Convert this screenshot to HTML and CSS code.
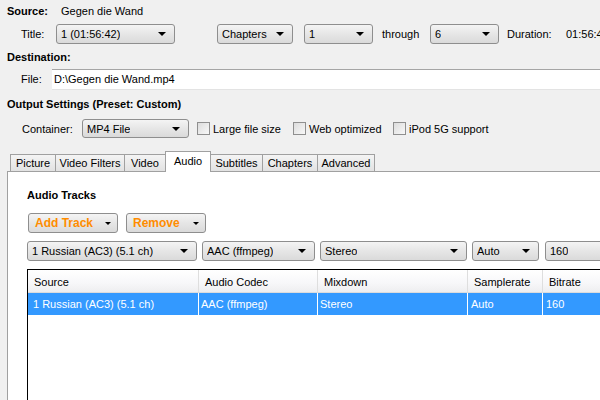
FILE: index.html
```html
<!DOCTYPE html>
<html>
<head>
<meta charset="utf-8">
<link rel="stylesheet" href="styles.css">
</head>
<body>
<div class="app">
  <div class="row r-source">
    <span class="bold w-src">Source:</span><span>Gegen die Wand</span>
  </div>
  <div class="row r-title">
    <span class="lbl w-title">Title:</span>
    <div class="combo c-title"><span>1 (01:56:42)</span><i class="arr"></i></div>
    <div class="combo c-chap"><span>Chapters</span><i class="arr"></i></div>
    <div class="combo c-from"><span>1</span><i class="arr"></i></div>
    <span class="through">through</span>
    <div class="combo c-to"><span>6</span><i class="arr"></i></div>
    <span class="dur-l">Duration:</span>
    <span class="dur-v">01:56:42</span>
  </div>
  <div class="row r-dest"><span class="bold">Destination:</span></div>
  <div class="row r-file">
    <span class="lbl w-file">File:</span>
    <div class="input">D:\Gegen die Wand.mp4</div>
  </div>
  <div class="row r-out"><span class="bold">Output Settings (Preset: Custom)</span></div>
  <div class="row r-cont">
    <span class="lbl w-cont">Container:</span>
    <div class="combo c-cont"><span>MP4 File</span><i class="arr"></i></div>
    <span class="chk"></span><span class="chk-l l1">Large file size</span>
    <span class="chk"></span><span class="chk-l l2">Web optimized</span>
    <span class="chk"></span><span class="chk-l">iPod 5G support</span>
  </div>
  <div class="tabs">
    <div class="tab t-pic">Picture</div>
    <div class="tab t-vf">Video Filters</div>
    <div class="tab t-vid">Video</div>
    <div class="tab active t-aud">Audio</div>
    <div class="tab t-sub">Subtitles</div>
    <div class="tab t-chp">Chapters</div>
    <div class="tab t-adv">Advanced</div>
  </div>
  <div class="panel">
    <div class="bold p-title">Audio Tracks</div>
    <div class="btns">
      <div class="btn b-add">Add Track<i class="arr sm"></i></div>
      <div class="btn b-rem">Remove<i class="arr sm"></i></div>
    </div>
    <div class="combos">
      <div class="combo a1"><span>1 Russian (AC3) (5.1 ch)</span><i class="arr"></i></div>
      <div class="combo a2"><span>AAC (ffmpeg)</span><i class="arr"></i></div>
      <div class="combo a3"><span>Stereo</span><i class="arr"></i></div>
      <div class="combo a4"><span>Auto</span><i class="arr"></i></div>
      <div class="combo a5"><span>160</span><i class="arr"></i></div>
    </div>
    <div class="table">
      <div class="thead">
        <div class="th">Source</div>
        <div class="th">Audio Codec</div>
        <div class="th">Mixdown</div>
        <div class="th">Samplerate</div>
        <div class="th">Bitrate</div>
      </div>
      <div class="trow">
        <div class="td">1 Russian (AC3) (5.1 ch)</div>
        <div class="td">AAC (ffmpeg)</div>
        <div class="td">Stereo</div>
        <div class="td">Auto</div>
        <div class="td">160</div>
      </div>
    </div>
  </div>
</div>
</body>
</html>
```
FILE: styles.css
```css
* { box-sizing: border-box; }
html, body { margin: 0; padding: 0; }
body {
  width: 600px; height: 400px; overflow: hidden;
  background: #f0f0f0;
  font-family: "Liberation Sans", Arial, sans-serif;
  font-size: 11px;
  color: #000;
}
.app { width: 600px; height: 400px; overflow: hidden; padding-left: 7px; }
.row { display: flex; align-items: center; white-space: nowrap; }
.row > * { flex: none; }
.bold { font-weight: bold; }
.r-source { height: 14px; margin-top: 4px; }
.w-src { width: 54px; }
.r-title { height: 20px; margin-top: 6px; padding-left: 14px; }
.lbl { display: inline-block; }
.w-title { width: 35px; }
.combo {
  position: relative;
  height: 20px;
  border: 1px solid #8e8e8e;
  border-radius: 3px;
  background: linear-gradient(#f4f4f4, #e6e6e6 50%, #dadada);
  display: flex; align-items: center;
  padding-left: 4px;
  flex: none;
}
.combo span { white-space: nowrap; overflow: hidden; }
.arr {
  position: absolute; right: 8px; top: 50%; margin-top: -2px;
  width: 0; height: 0;
  border-left: 4px solid transparent; border-right: 4px solid transparent;
  border-top: 4px solid #000;
}
.arr.sm { right: 6px; border-left-width: 3px; border-right-width: 3px; border-top-width: 3px; margin-top: -1px; }
.c-title { width: 119px; }
.c-chap { width: 76px; margin-left: 42px; }
.c-from { width: 69px; margin-left: 11px; }
.through { margin-left: 9px; width: 48px; }
.c-to { width: 69px; }
.dur-l { margin-left: 8px; width: 59px; }
.r-dest { height: 14px; margin-top: 6px; }
.r-file { height: 20px; margin-top: 5px; padding-left: 14px; }
.w-file { width: 31px; }
.r-file .input {
  flex: 1 1 auto; height: 21px; background: #fff;
  border-top: 1px solid #a5a5a5; border-bottom: 1px solid #e3e3e3;
  padding-left: 2px; display: flex; align-items: center;
  margin-right: -10px;
}
.r-out { height: 14px; margin-top: 8px; }
.r-cont { height: 19px; margin-top: 8px; padding-left: 15px; }
.w-cont { width: 60px; }
.c-cont { width: 107px; height: 19px; }
.chk {
  width: 13px; height: 13px; border: 1px solid #8f8f8f;
  background: linear-gradient(135deg, #dcdcdc, #f8f8f8);
  margin-left: 8px; margin-right: 3px;
}
.chk-l.l1 { width: 72px; }
.chk-l.l2 { width: 76px; }
.tabs {
  display: flex; align-items: flex-end; height: 20px; margin-top: 13px;
  padding-left: 3px; position: relative; z-index: 1;
}
.tab {
  height: 17px; border: 1px solid #a0a0a0; border-bottom: none;
  background: linear-gradient(#f4f4f4, #e2e2e2);
  display: flex; align-items: center; justify-content: center;
  margin-right: -1px; flex: none;
}
.tab.active { background: #fff; padding-bottom: 3px; margin-bottom: -1px; height: 21px; }
.t-pic { width: 46px; }
.t-vf { width: 70px; }
.t-vid { width: 42px; }
.t-aud { width: 46px; }
.t-sub { width: 53px; }
.t-chp { width: 56px; }
.t-adv { width: 58px; }
.panel {
  background: #fff; border-top: 1px solid #a0a0a0; border-left: 1px solid #a0a0a0;
  height: 240px; margin-left: 0; padding-left: 19px; margin-right: -20px;
}
.p-title { margin-top: 16px; height: 14px; line-height: 14px; }
.btns { display: flex; margin-top: 11px; margin-left: 1px; height: 20px; }
.btn {
  position: relative; height: 20px; border: 1px solid #8e8e8e; border-radius: 3px;
  background: linear-gradient(#f4f4f4, #e6e6e6 50%, #dadada);
  color: #ff8c00; font-weight: bold; font-size: 12px;
  display: flex; align-items: center; padding-left: 6px;
}
.b-add { width: 90px; }
.b-rem { width: 80px; margin-left: 8px; }
.combos { display: flex; margin-top: 8px; }
.a1 { width: 170px; }
.a2 { width: 113px; margin-left: 5px; }
.a3 { width: 147px; margin-left: 5px; }
.a4 { width: 67px; margin-left: 5px; }
.a5 { width: 80px; margin-left: 6px; }
.table {
  margin-top: 8px; border: 1px solid #000; height: 200px; background: #fff;
}
.thead, .trow { display: grid; grid-template-columns: 171px 119px 150px 75px 80px; }
.thead { height: 23px; background: linear-gradient(#ffffff, #f7f7f9 60%, #eeeef0); border-bottom: 1px solid #dcdcdc; }
.th { display: flex; align-items: center; padding-left: 6px; border-right: 1px solid #dedede; padding-top: 2px; }
.trow { height: 22px; background: #3399ff; color: #fff; }
.td { display: flex; align-items: center; padding-left: 5px; border-right: 1px solid #fff; }
.td:nth-child(2) { padding-left: 2px; }
.td:nth-child(3) { padding-left: 2px; }
.td:nth-child(4) { padding-left: 3px; }
.td:nth-child(5) { padding-left: 3px; }
```
